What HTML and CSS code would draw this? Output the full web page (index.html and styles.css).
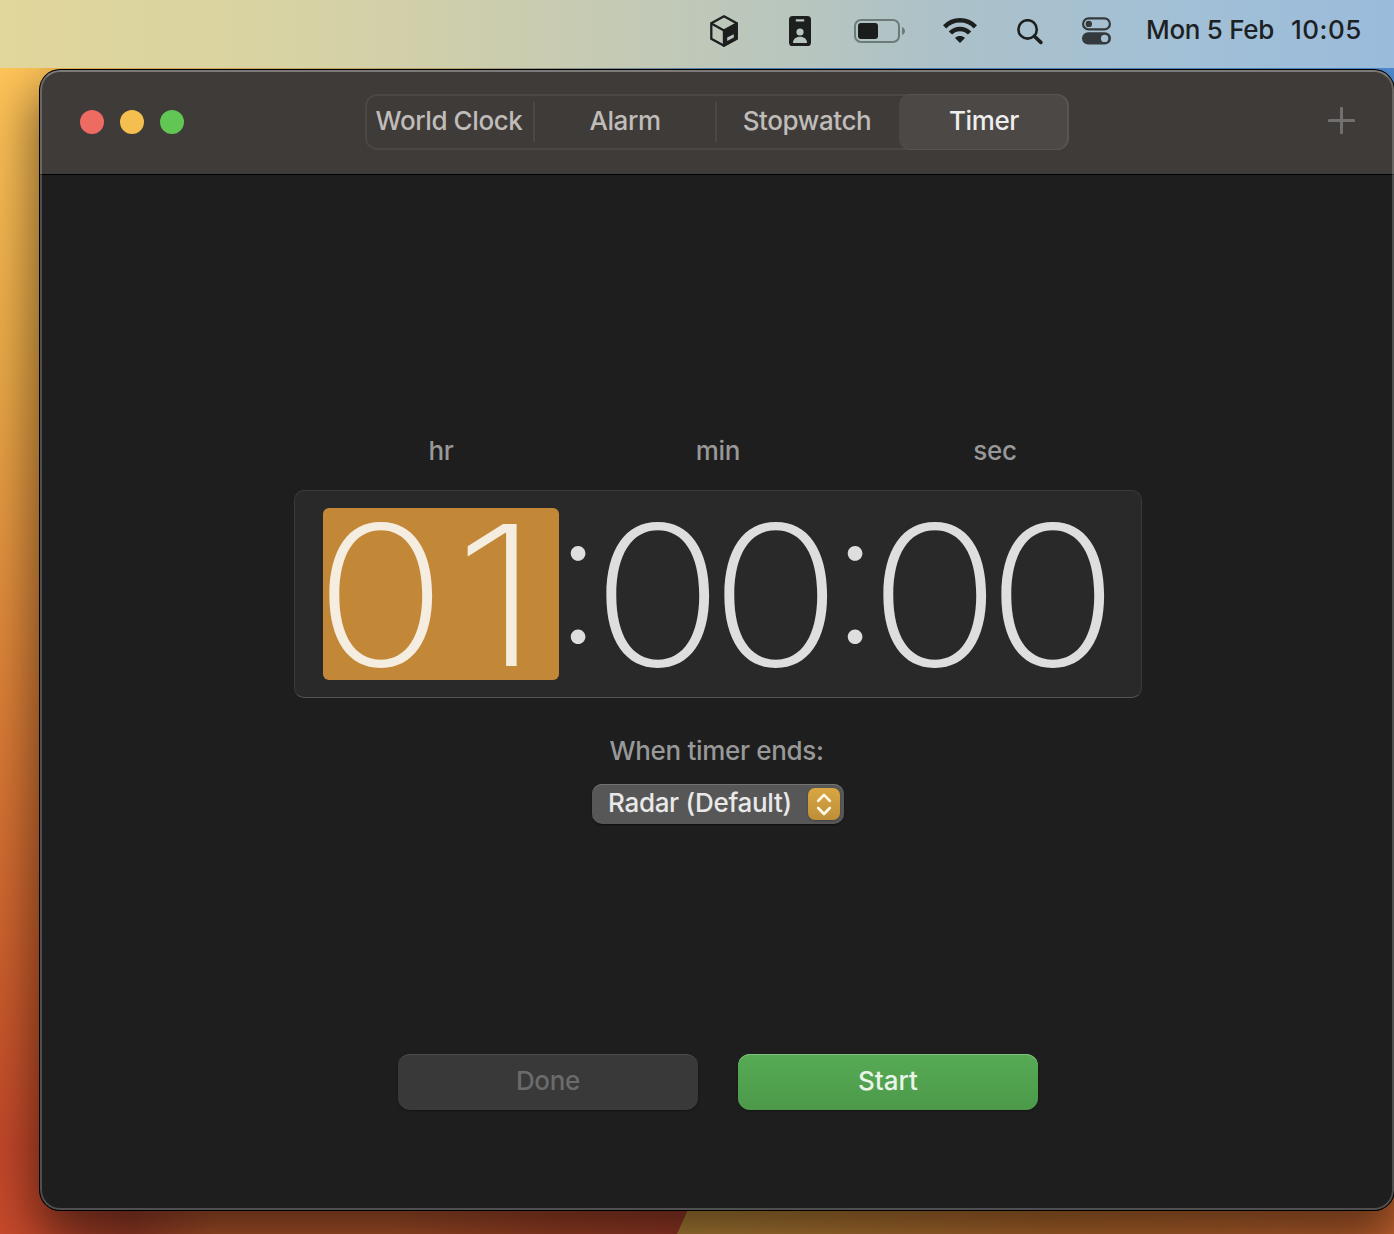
FILE: index.html
```html
<!DOCTYPE html>
<html lang="en">
<head>
<meta charset="utf-8">
<title>Clock</title>
<link rel="stylesheet" href="styles.css">
</head>
<body>
<div class="desktop">
  <svg class="wallpaper" viewBox="0 0 1394 1234" preserveAspectRatio="none" aria-hidden="true">
    <defs>
      <linearGradient id="sun" x1="0" y1="0" x2="0" y2="1">
        <stop offset="0.05" stop-color="#ffc459"/>
        <stop offset="0.3" stop-color="#eaa947"/>
        <stop offset="0.55" stop-color="#dd8238"/>
        <stop offset="0.8" stop-color="#cb5c2c"/>
        <stop offset="0.93" stop-color="#c3472a"/>
        <stop offset="1" stop-color="#c84a2b"/>
      </linearGradient>
      <linearGradient id="dune" x1="0" y1="0" x2="1" y2="0">
        <stop offset="0" stop-color="#c84a2b"/>
        <stop offset="0.13" stop-color="#a5402a"/>
        <stop offset="0.25" stop-color="#b9592c"/>
        <stop offset="0.5" stop-color="#b9592c"/>
        <stop offset="0.75" stop-color="#aa4528"/>
        <stop offset="1" stop-color="#a23a2a"/>
      </linearGradient>
      <linearGradient id="sand" x1="0" y1="0" x2="1" y2="0">
        <stop offset="0" stop-color="#bd8b3b"/>
        <stop offset="0.5" stop-color="#bd6f2e"/>
        <stop offset="1" stop-color="#c9652f"/>
      </linearGradient>
      <linearGradient id="sky" x1="0" y1="0" x2="1" y2="0">
        <stop offset="0" stop-color="#fbc057"/>
        <stop offset="0.3" stop-color="#d0b678"/>
        <stop offset="0.5" stop-color="#5b8fc4"/>
        <stop offset="1" stop-color="#5490d8"/>
      </linearGradient>
    </defs>
    <rect width="1394" height="1234" fill="url(#sun)"/>
    <rect x="40" y="1150" width="700" height="84" fill="url(#dune)"/>
    <path d="M715 1150L677 1234H1394V1150Z" fill="url(#sand)"/>
    <rect x="40" width="1354" height="120" fill="url(#sky)"/>
  </svg>

  <header class="menubar">
    <svg class="mi cube" width="28" height="32" viewBox="0 0 28 32">
      <path d="M14 1.3L26.7 8.3V23.7L14 30.7L1.3 23.7V8.3Z" fill="none" stroke="#1d1f1f" stroke-width="2.3"/>
      <path d="M1.3 8.4L14 15.4L26.7 8.4" fill="none" stroke="#1d1f1f" stroke-width="2.3"/>
      <path d="M12.8 15L27.8 7.5V24L14 31.8H12.8Z" fill="#1d1f1f"/>
      <path d="M17.2 22.6L23.8 19.2V22.4L17.2 25.9Z" fill="#bac6bd"/>
    </svg>
    <svg class="mi badge" width="22" height="30" viewBox="0 0 22 30">
      <rect width="22" height="30" rx="3.6" fill="#1d1f1f"/>
      <rect x="6.7" y="3.3" width="8.6" height="2.2" rx="0.8" fill="#b8c6c0"/>
      <circle cx="11" cy="16" r="3.6" fill="#b8c6c0"/>
      <path d="M4 27C4 22.8 7 20.7 11 20.7S18 22.8 18 27Z" fill="#b8c6c0"/>
    </svg>
    <svg class="mi battery" width="51" height="24" viewBox="0 0 51 24">
      <rect x="1" y="1" width="44" height="22" rx="6" fill="none" stroke="#6d7a7a" stroke-width="2"/>
      <rect x="4" y="4" width="20" height="16" rx="3" fill="#1b1d1d"/>
      <path d="M48 8C52 9.5 52 14.5 48 16Z" fill="#6d7a7a"/>
    </svg>
    <svg class="mi wifi" width="34" height="26" viewBox="0 0 34 26">
      <path d="M1.6 9.8C10 1 24 1 32.4 9.8" fill="none" stroke="#1d1f1f" stroke-width="4.6"/>
      <path d="M7.4 16C12.6 10.6 21.4 10.6 26.6 16" fill="none" stroke="#1d1f1f" stroke-width="4.6"/>
      <path d="M17 26L12 20.9C14.7 18.3 19.3 18.3 22 20.9Z" fill="#1d1f1f"/>
    </svg>
    <svg class="mi search" width="26" height="26" viewBox="0 0 26 26">
      <circle cx="10.6" cy="10.4" r="9.2" fill="none" stroke="#1d1f1f" stroke-width="2.6"/>
      <path d="M17.4 17.2L23.8 23.4" stroke="#1d1f1f" stroke-width="3.6" stroke-linecap="round"/>
    </svg>
    <svg class="mi control" width="29" height="28" viewBox="0 0 29 28">
      <rect x="1.1" y="1.4" width="26.8" height="11" rx="5.5" fill="none" stroke="#33393d" stroke-width="2.2"/>
      <circle cx="6.8" cy="6.9" r="3.2" fill="#33393d"/>
      <rect y="15.2" width="29" height="12.4" rx="6.2" fill="#33393d"/>
      <circle cx="22.6" cy="21.4" r="3.7" fill="#a6c0d2"/>
    </svg>
    <span class="date">Mon 5 Feb</span>
    <span class="time">10:05</span>
  </header>

  <main class="window">
    <div class="titlebar">
      <div class="lights"><i class="light close"></i><i class="light minimise"></i><i class="light zoom"></i></div>
      <nav class="tabs">
        <span class="tab world"><b>World Clock</b></span>
        <span class="tab alarm"><b>Alarm</b></span>
        <span class="tab stopwatch"><b>Stopwatch</b></span>
        <span class="tab timer"><b>Timer</b></span>
      </nav>
      <svg class="add" width="28" height="28" viewBox="0 0 28 28"><path d="M14.5 1.3V25.7M2.3 13.5H26.7" stroke="#71706e" stroke-width="3" stroke-linecap="round"/></svg>
    </div>

    <section class="content">
      <div class="units"><span>hr</span><span>min</span><span>sec</span></div>
      <div class="display">
        <div class="pair selected"><span>0</span><span class="one">1</span></div>
        <div class="colon"><span>:</span></div>
        <div class="pair"><span>0</span><span>0</span></div>
        <div class="colon"><span>:</span></div>
        <div class="pair"><span>0</span><span>0</span></div>
      </div>
      <div class="ends-label">When timer ends:</div>
      <div class="popup">
        <span class="popup-text">Radar (Default)</span>
        <span class="stepper">
          <svg width="32" height="32" viewBox="0 0 32 32"><path d="M10.2 12.9L16 6.9L21.8 12.9M10.2 20L16 26L21.8 20" fill="none" stroke="#fff8e8" stroke-width="2.7" stroke-linecap="round" stroke-linejoin="round"/></svg>
        </span>
      </div>
      <div class="actions">
        <div class="button done"><span>Done</span></div>
        <div class="button start"><span>Start</span></div>
      </div>
    </section>
  </main>
</div>
</body>
</html>
```

FILE: styles.css
```css
* { box-sizing: border-box; }

body {
  margin: 0;
  font-family: Inter, "Liberation Sans", sans-serif;
  font-size: 26px;
  font-weight: 450;
  line-height: 32px;
  letter-spacing: -0.3px;
  color: #dfdfdf;
}

.desktop {
  position: relative;
  width: 1394px;
  height: 1234px;
  overflow: hidden;
}

.wallpaper {
  position: absolute;
  inset: 0;
  width: 100%;
  height: 100%;
}

.menubar {
  position: relative;
  z-index: 2;
  display: flex;
  align-items: flex-start;
  height: 68px;
  padding-left: 710px;
  background: linear-gradient(90deg, #e1d69b 0%, #d8d3a3 20%, #c5cab4 44%, #b8c6be 57%, #acc1c9 68%, #a2c0d6 85%, #9abbdb 100%);
  color: #1d2124;
  white-space: nowrap;
}

.mi { flex: none; }
.cube { margin-top: 15px; }
.badge { margin: 16px 0 0 51px; }
.battery { margin: 19px 0 0 43px; }
.wifi { margin: 17px 0 0 38px; }
.search { margin: 19px 0 0 40px; }
.control { margin: 17px 0 0 39px; }

.date,
.time { margin-top: 14px; }
.date { width: 145px; margin-left: 35px; letter-spacing: -0.3px; }
.time { letter-spacing: 0.5px; }

.window {
  position: relative;
  width: 1354px;
  height: 1140px;
  margin: 2px 0 0 40px;
  border-radius: 20px;
  overflow: hidden;
  background: #1e1e1e;
  box-shadow: 0 0 0 1px #000, 0 24px 50px 6px rgba(0, 0, 0, 0.52);
}

/* light rim along the window's inner edge */
.window::after {
  content: "";
  position: absolute;
  inset: 0;
  border: 2px solid rgba(255, 255, 255, 0.22);
  border-top-color: rgba(255, 255, 255, 0.32);
  border-radius: 20px;
  pointer-events: none;
}

.titlebar {
  display: flex;
  height: 105px;
  border-bottom: 1px solid #000;
  background: #3f3b38;
  padding: 24px 38px 0 40px;
}

.lights { display: flex; gap: 16px; padding-top: 16px; width: 285px; flex: none; }
.light { width: 24px; height: 24px; border-radius: 50%; }
.close { background: #ed6b60; }
.minimise { background: #f5bf4f; }
.zoom { background: #62c655; }

.tabs {
  display: flex;
  flex: none;
  width: 704px;
  height: 56px;
  border-radius: 12px;
  box-shadow: inset 0 0 0 2px #4b4744;
  color: #bfbcba;
  letter-spacing: -0.4px;
}

.tab {
  display: flex;
  justify-content: center;
  padding-top: 11px;
  white-space: nowrap;
}
.tab b { font-weight: 450; }
.world { width: 168px; }
.alarm { width: 182px; padding-left: 2px; }
.stopwatch { width: 184px; }
.timer { width: 170px; }
.alarm,
.stopwatch {
  background: linear-gradient(#4b4744, #4b4744) 0 8px / 2px 40px no-repeat;
}
.timer {
  border-radius: 12px;
  background: #4c4845;
  box-shadow: inset -1px 0 0 1px #585450;
  color: #efeeee;
}
.tab.timer b { font-weight: 500; }

.add { margin: 13px 0 0 258px; flex: none; }

.content {
  display: flex;
  flex-direction: column;
  align-items: center;
  width: 848px;
  margin-left: 254px;
}

.units {
  display: flex;
  justify-content: center;
  width: 831px;
  margin-top: 260px;
  color: #989898;
}
.units span { width: 277px; text-align: center; }

.display {
  display: flex;
  width: 848px;
  height: 208px;
  margin-top: 23px;
  padding: 17px 0 0 28px;
  border: 1px solid #3a3a3a;
  border-bottom-color: #555;
  border-radius: 10px;
  background: #292929;
  color: #dedede;
  font-size: 195px;
  font-weight: 255;
  line-height: 174px;
  letter-spacing: 0;
}
.pair { display: flex; width: 236px; height: 172px; border-radius: 6px; }
.pair span { width: 118px; text-align: center; transform: translateX(-1.2px) scaleX(1.125); }
.pair .one { transform: translateX(-3px) scaleX(1.18); }
.selected { background: #c28837; color: #f5ede0; }
.colon {
  display: flex;
  justify-content: center;
  width: 41px;
  font-size: 187px;
  font-weight: 210;
}
.colon span { transform: translate(-1.3px, -20px); }

.ends-label { margin: 37px 3px 0 0; color: #989898; letter-spacing: -0.33px; }

.popup {
  display: flex;
  width: 252px;
  height: 40px;
  margin-top: 17px;
  padding: 4px 4px 4px 16px;
  border-radius: 10px;
  background: #575757;
  box-shadow: inset 0 1px 0 #737373, 0 1px 2px #0008;
  color: #e9e9e9;
  justify-content: space-between;
  white-space: nowrap;
}
.popup-text { margin-top: -1px; }
.stepper {
  width: 32px;
  height: 32px;
  border-radius: 7px;
  background: linear-gradient(#daa642, #bd8f38);
  box-shadow: 0 1px 2px #0004;
}
.stepper svg { display: block; }

.actions { display: flex; gap: 40px; margin-top: 230px; }
.button {
  width: 300px;
  height: 56px;
  padding-top: 11px;
  border-radius: 12px;
  text-align: center;
}
.done {
  background: #393939;
  box-shadow: inset 0 1px 0 #4a4a4a, 0 1px 2px #0006;
  color: #6b6b6b;
}
.start {
  background: linear-gradient(#57ab54, #4c994a);
  box-shadow: inset 0 1px 0 #80c17d, 0 1px 2px #0006;
  color: #eaf4ea;
  font-weight: 500;
  letter-spacing: 0;
}
```
